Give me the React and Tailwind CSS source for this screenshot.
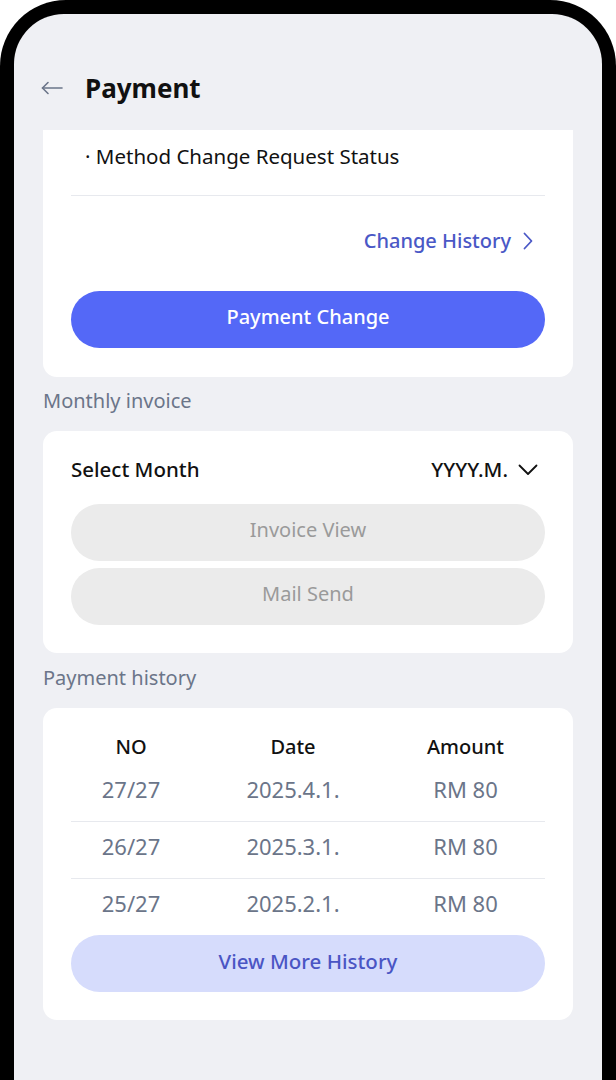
import React from 'react';

const rows = [
  { no: '27/27', date: '2025.4.1.', amount: 'RM 80' },
  { no: '26/27', date: '2025.3.1.', amount: 'RM 80' },
  { no: '25/27', date: '2025.2.1.', amount: 'RM 80' },
];

function BackArrow() {
  return (
    <svg width="22" height="14" viewBox="0 0 22 14" fill="none" stroke="#6b7589" strokeWidth="1.6" strokeLinecap="round" strokeLinejoin="round">
      <path d="M21 7H1.5" />
      <path d="M7 1.5L1.5 7L7 12.5" />
    </svg>
  );
}

function ChevronRight() {
  return (
    <svg width="10" height="18" viewBox="0 0 10 18" fill="none" stroke="#4a58c6" strokeWidth="1.8" strokeLinecap="round" strokeLinejoin="round">
      <path d="M1.5 1.5L8.5 9L1.5 16.5" />
    </svg>
  );
}

function ChevronDown() {
  return (
    <svg width="20" height="12" viewBox="0 0 20 12" fill="none" stroke="#111" strokeWidth="1.8" strokeLinecap="round" strokeLinejoin="round">
      <path d="M1.5 1.5L10 10L18.5 1.5" />
    </svg>
  );
}

export default function App() {
  return (
    <div className="w-[616px] h-[1080px] bg-white overflow-hidden font-['Noto_Sans',sans-serif]">
      <div className="h-full bg-black rounded-t-[66px] pt-[14px] px-[14px]">
        <div className="h-full bg-[#eff0f4] rounded-t-[50px] px-[29px] flex flex-col">
          {/* header */}
          <div className="h-[116px] flex items-center pt-[32px] gap-[22px] -ml-[2px]">
            <BackArrow />
            <h1 className="text-[26px] leading-[32px] font-bold text-[#111]">Payment</h1>
          </div>

          {/* payment method card */}
          <div className="bg-white rounded-b-[14px] px-[28px] pt-[12px] pb-[29px]">
            <div className="border-b border-[#e7e9ee] pb-[25px] pl-[14px]">
              <p className="text-[20.5px] leading-[28px] text-[#111]">· Method Change Request Status</p>
            </div>
            <div className="flex justify-end items-center gap-[12px] pt-[31px] pr-[12px]">
              <span className="text-[20px] leading-[28px] font-medium text-[#4a58c6]">Change History</span>
              <ChevronRight />
            </div>
            <button className="mt-[36px] w-full h-[57px] rounded-full bg-[#5468f7] text-white text-[20px] leading-[28px] font-medium pb-[6px]">
              Payment Change
            </button>
          </div>

          <p className="pt-[12px] pb-[18px] text-[20px] leading-[24px] text-[#6b7589]">Monthly invoice</p>

          {/* monthly invoice card */}
          <div className="bg-white rounded-[14px] px-[28px] pt-[25px] pb-[28px]">
            <div className="flex justify-between items-center h-[28px]">
              <span className="text-[20.5px] leading-[28px] font-medium text-[#111] pb-[3px]">Select Month</span>
              <div className="flex items-center gap-[10px] pr-[7px]">
                <span className="text-[20.5px] leading-[28px] font-medium text-[#111] pb-[3px]">YYYY.M.</span>
                <ChevronDown />
              </div>
            </div>
            <div className="mt-[20px] flex flex-col gap-[7px]">
              <button className="w-full h-[57px] rounded-full bg-[#ebebeb] text-[#9a9a9a] text-[20px] leading-[28px] pb-[6px]">Invoice View</button>
              <button className="w-full h-[57px] rounded-full bg-[#ebebeb] text-[#9a9a9a] text-[20px] leading-[28px] pb-[6px]">Mail Send</button>
            </div>
          </div>

          <p className="pt-[13px] pb-[18px] text-[20px] leading-[24px] text-[#6b7589]">Payment history</p>

          {/* payment history card */}
          <div className="bg-white rounded-[14px] px-[28px] pt-[25px] pb-[28px]">
            <div className="grid grid-cols-[120px_204px_1fr] pr-[9px] pb-[4px] text-[20px] leading-[28px] font-medium text-[#111] text-center">
              <span>NO</span>
              <span>Date</span>
              <span>Amount</span>
            </div>
            {rows.map((r, i) => (
              <div
                key={r.no}
                className={`grid grid-cols-[120px_204px_1fr] pr-[9px] pt-[10px] pb-[18px] text-[22px] leading-[28px] text-[#6b7589] text-center ${i < rows.length - 1 ? 'border-b border-[#e7e9ee]' : ''}`}
              >
                <span>{r.no}</span>
                <span>{r.date}</span>
                <span>{r.amount}</span>
              </div>
            ))}
            <button className="w-full h-[57px] rounded-full bg-[#d6dcfc] text-[#4a55c4] text-[20.5px] leading-[28px] font-medium pb-[6px]">
              View More History
            </button>
          </div>
        </div>
      </div>
    </div>
  );
}
